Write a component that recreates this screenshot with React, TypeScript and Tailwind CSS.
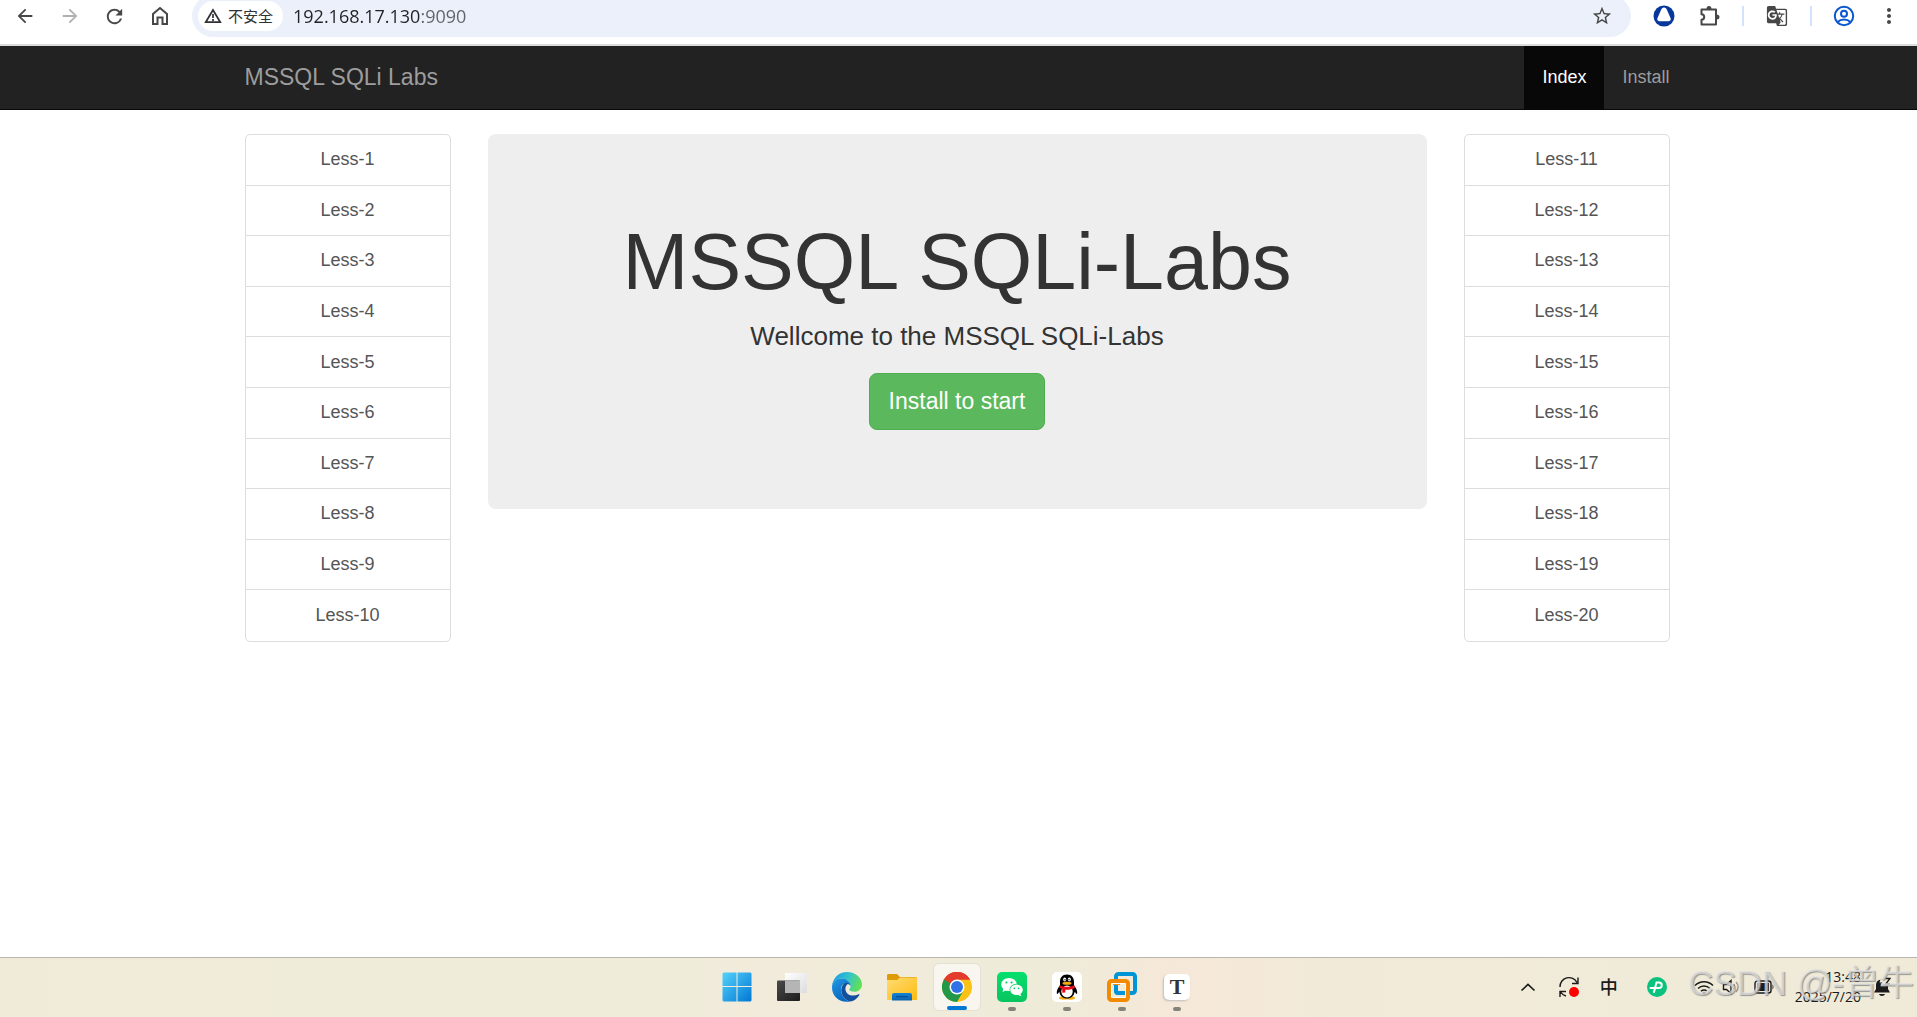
import type { ReactNode } from "react";
import { MdArrowBack, MdArrowForward, MdGTranslate, MdMoreVert, MdRefresh, MdStarBorder } from "react-icons/md";

const leftLessons = [1, 2, 3, 4, 5, 6, 7, 8, 9, 10];
const rightLessons = [11, 12, 13, 14, 15, 16, 17, 18, 19, 20];

function HomeIcon() {
  return (
    <svg viewBox="0 0 18 20" className="h-5 w-[18px]" fill="none" stroke="#474747" strokeWidth="2">
      <path d="M2 18V8l7-6 7 6v10h-4.500v-6.500h-5V18Z" />
    </svg>
  );
}

function WarningIcon() {
  return (
    <svg viewBox="0 0 18 16" className="h-4 w-[18px]" fill="none" stroke="#303134">
      <path d="M9 2 16.300 14.200H1.700Z" strokeWidth="1.700" />
      <path d="M9 6v4M9 11v2" strokeWidth="1.700" />
    </svg>
  );
}

function SailIcon() {
  return (
    <svg viewBox="0 0 22 22" className="size-[22px]">
      <circle cx="11" cy="11" r="10.500" fill="#06379a" />
      <path
        d="M11 2.500c1.600 0 2.400 1.100 3 2.400l3.400 7.800c1 2.300-.400 3.600-2.400 3.600H7c-2 0-3.400-1.300-2.400-3.600L8 4.900c.600-1.300 1.400-2.400 3-2.400Z"
        fill="#fff"
      />
    </svg>
  );
}

function PuzzleIcon() {
  return (
    <svg viewBox="0 0 22 22" className="size-[22px]" fill="none" stroke="#474747" strokeWidth="2" strokeLinejoin="round">
      <path d="M2.500 4.500H17v15H2.500v-4.700c3.600-.300 3.600-5.300 0-5.600Z" />
      <path d="M7.500 4a2.500 3 0 0 1 5 0ZM17.500 9.500a3 2.500 0 0 1 0 5Z" fill="#474747" stroke="none" />
    </svg>
  );
}

function ProfileIcon() {
  return (
    <svg viewBox="0 0 22 22" className="size-[22px]" fill="none" stroke="#0b57d0" strokeWidth="2">
      <circle cx="11" cy="11" r="9.200" />
      <circle cx="11" cy="8.700" r="3" />
      <path d="M4.500 17c3.600-3.300 9.400-3.300 13 0" />
    </svg>
  );
}

function BrowserBar() {
  return (
    <header className="flex h-[46px] items-center overflow-hidden border-b-2 border-[#dcdcdc] bg-white pb-3 text-[#474747]">
      <div className="flex shrink-0 items-center pl-0.5">
        <button aria-label="Back" className="flex w-[45px] justify-center">
          <MdArrowBack className="size-[22px]" />
        </button>
        <button aria-label="Forward" className="flex w-[45px] justify-center text-[#b0b0b0]">
          <MdArrowForward className="size-[22px]" />
        </button>
        <button aria-label="Reload" className="flex w-[45px] justify-center">
          <MdRefresh className="size-[23px]" />
        </button>
        <button aria-label="Home" className="flex w-[45px] justify-center">
          <HomeIcon />
        </button>
      </div>
      <div className="ml-2.5 flex h-[42px] flex-1 shrink-0 items-center rounded-full bg-[#ecf0fa] pl-1.5 pr-[18px]">
        <button className="flex h-[30px] shrink-0 items-center gap-1.5 rounded-full bg-white pl-1.5 pr-2.5 font-['Noto_Sans_CJK_SC',sans-serif] text-[15px] text-[#303134]">
          <WarningIcon />
          不安全
        </button>
        <input
          aria-label="Address"
          defaultValue="192.168.17.130:9090"
          className="ml-2.5 min-w-0 flex-1 bg-[linear-gradient(90deg,#202124_127px,#5f6368_127px)] bg-clip-text font-['Open_Sans',sans-serif] text-[18px] leading-6 text-transparent caret-black outline-none"
        />
        <button aria-label="Bookmark">
          <MdStarBorder className="size-[22px]" />
        </button>
      </div>
      <div className="flex shrink-0 items-center pl-[22px] pr-4">
        <button aria-label="Sail extension">
          <SailIcon />
        </button>
        <button aria-label="Extensions" className="ml-6">
          <PuzzleIcon />
        </button>
        <span className="ml-[21px] h-5 w-0.5 bg-[#d3e3fd]" />
        <button aria-label="Translate" className="ml-[22px]">
          <MdGTranslate className="size-[22px]" />
        </button>
        <span className="ml-[22px] h-5 w-0.5 bg-[#d3e3fd]" />
        <button aria-label="Profile" className="ml-[21px]">
          <ProfileIcon />
        </button>
        <button aria-label="Menu" className="ml-[22px]">
          <MdMoreVert className="size-6" />
        </button>
      </div>
    </header>
  );
}

function Navbar() {
  return (
    <nav className="border-b border-[#080808] bg-[#222] pr-[3px]">
      <div className="mx-auto flex h-[63px] max-w-[1425px] items-stretch justify-between text-[#9d9d9d]">
        <a href="#" className="flex items-center text-[23px]">
          MSSQL SQLi Labs
        </a>
        <div className="flex text-[18px]">
          <a href="#" className="flex items-center bg-[#080808] px-[18px] text-white">
            Index
          </a>
          <a href="#install" className="flex items-center pl-[18px]">
            Install
          </a>
        </div>
      </div>
    </nav>
  );
}

function LessonList({ lessons }: { lessons: number[] }) {
  return (
    <ul className="grid h-[508px] grid-rows-10 divide-y divide-[#ddd] rounded-[5px] border border-[#ddd] text-[18px] text-[#555]">
      {lessons.map((n) => (
        <li key={n}>
          <a href={`#less-${n}`} className="flex h-full items-center justify-center">
            Less-{n}
          </a>
        </li>
      ))}
    </ul>
  );
}

function WindowsIcon() {
  return (
    <svg viewBox="0 0 30 30" className="size-[30px]">
      <defs>
        <linearGradient id="win" x1="0" y1="0" x2="1" y2="1">
          <stop offset="0" stopColor="#55d2fb" />
          <stop offset="1" stopColor="#0078d4" />
        </linearGradient>
      </defs>
      <path d="M1.500.500H14.500V14H.500V1.500ZM15.500.500h13l1 1V14h-14ZM.500 15h14v14.500h-13l-1-1ZM15.500 15h14v13.500l-1 1h-13Z" fill="url(#win)" />
    </svg>
  );
}

function TaskViewIcon() {
  return (
    <svg viewBox="0 0 30 30" className="size-[30px]">
      <defs>
        <linearGradient id="tvDark" x1="0" y1="0" x2="1" y2="1">
          <stop offset="0" stopColor="#4a4a4a" />
          <stop offset="1" stopColor="#1c1c1c" />
        </linearGradient>
        <linearGradient id="tvLight" x1="0" y1="0" x2="1" y2="1">
          <stop offset="0" stopColor="#fff" />
          <stop offset="1" stopColor="#dcdcdc" />
        </linearGradient>
      </defs>
      <rect x="8" y="1" width="22" height="20" rx="1" fill="url(#tvLight)" />
      <rect x="0" y="8.500" width="23" height="20.500" rx="1" fill="url(#tvDark)" />
      <path d="M8 8.500h15V21H8Z" fill="#b5b5b5" />
    </svg>
  );
}

function EdgeIcon() {
  return (
    <svg viewBox="0 0 30 30" className="size-[30px]">
      <defs>
        <linearGradient id="edgeTop" x1="0" y1=".3" x2="1" y2=".6">
          <stop offset="0" stopColor="#1a9de2" />
          <stop offset=".5" stopColor="#35c5c9" />
          <stop offset="1" stopColor="#66e24c" />
        </linearGradient>
        <linearGradient id="edgeBody" x1="0" y1="0" x2=".5" y2="1">
          <stop offset="0" stopColor="#2196e3" />
          <stop offset="1" stopColor="#0668c0" />
        </linearGradient>
      </defs>
      <path d="M0 14.500C.500 6 7 0 15 0c8.600 0 15 6 15 12.500 0 4.500-3.500 7.300-7.500 7.300-3.300 0-5.200-1-5.200-2.200 0-.900 1.300-1.400 1.300-3.600C18.600 9.500 13.500 6.500 9 6.500 4.500 6.500 1 9.500 0 14.500Z" fill="url(#edgeTop)" />
      <path d="M0 15.500C0 9.600 4.500 6.400 9.200 6.400c5 0 9.400 3.300 9.400 7.600 0 0-3.800-4.600-7.600-1.500-4.500 3.800-1.500 15 7 17-9.500 2-18-4.500-18-14Z" fill="url(#edgeBody)" />
      <path d="M12 11.800C6 17.500 10.500 28 18.500 29.600c4-.900 7-3.300 8.900-6.600.300-.600-.200-1-.800-.700-5.600 2.900-13 .800-13.200-5.300-.100-2 .800-3.300 1.500-4.300.500-.700 1.500-1.200 2.400-1-1.900-1.100-3.700-1.200-5.300.1Z" fill="#124f9c" />
    </svg>
  );
}

function FolderIcon() {
  return (
    <svg viewBox="0 0 30 30" className="size-[30px]">
      <defs>
        <linearGradient id="folder" x1="0" y1="0" x2="1" y2="1">
          <stop offset="0" stopColor="#ffdc73" />
          <stop offset="1" stopColor="#fdbb12" />
        </linearGradient>
        <linearGradient id="tray" x1="0" y1="0" x2="0" y2="1">
          <stop offset="0" stopColor="#1384d8" />
          <stop offset="1" stopColor="#0c63b0" />
        </linearGradient>
      </defs>
      <path d="M0 3.500C0 2.600.600 2 1.500 2H10l3 3h15.500c.900 0 1.500.600 1.500 1.500V12H0Z" fill="#dd9a09" />
      <path d="M0 8h10l3-2.500h17V27c0 .600-.400 1-1 1H1c-.600 0-1-.400-1-1Z" fill="url(#folder)" />
      <path d="M5 28.500V23c0-1.200.800-2 2-2h16c1.200 0 2 .800 2 2v5.500Z" fill="url(#tray)" />
      <path d="M9 24.700h12" stroke="#084786" />
    </svg>
  );
}

function ChromeIcon() {
  return (
    <svg viewBox="0 0 30 30" className="size-[30px]">
      <circle cx="15" cy="15" r="15" fill="#fbc116" />
      <path d="M15 15 2 7.500A15 15 0 0 1 28 7.500Z" fill="#e33b2e" />
      <path d="M2 7.500A15 15 0 0 0 15 30l6.500-11.300L15 15Z" fill="#229848" />
      <path d="M15 7.500h13L21.500 18.700Z" fill="#fbc116" />
      <path d="m2 7.500 6.500 11.300L15 7.500Z" fill="#229848" />
      <path d="M2 7.500C5 2.800 9.500 0 15 0s10.200 2.900 13 7.500H15a7.500 7.500 0 0 0-6.600 4Z" fill="#e33b2e" />
      <path d="M2 7.500 8.500 18.700" stroke="#229848" />
      <circle cx="15" cy="15" r="7.500" fill="#fff" />
      <circle cx="15" cy="15" r="6" fill="#2f72e8" />
    </svg>
  );
}

function WeChatIcon() {
  return (
    <svg viewBox="0 0 30 30" className="size-[30px]">
      <defs>
        <linearGradient id="wechat" x1="0" y1="0" x2="0" y2="1">
          <stop offset="0" stopColor="#04df6d" />
          <stop offset="1" stopColor="#08c45f" />
        </linearGradient>
      </defs>
      <rect width="30" height="30" rx="5" fill="url(#wechat)" />
      <path d="m6.500 16-1 4 4-2Z" fill="#fff" />
      <ellipse cx="12" cy="12.500" rx="7.800" ry="6.600" fill="#fff" />
      <ellipse cx="19.500" cy="17.700" rx="7" ry="6" fill="#07cd64" />
      <ellipse cx="19.500" cy="17.700" rx="6.300" ry="5.300" fill="#fff" />
      <path d="m23 21.500 1.500 2.700-4-1.500Z" fill="#fff" />
      <g fill="#07cd64">
        <circle cx="9.400" cy="10.500" r="1.100" />
        <circle cx="14.600" cy="10.500" r="1.100" />
        <circle cx="17.300" cy="16.300" r=".9" />
        <circle cx="21.600" cy="16.300" r=".9" />
      </g>
    </svg>
  );
}

function QQIcon() {
  return (
    <svg viewBox="0 0 30 30" className="size-[30px]">
      <rect width="30" height="30" rx="5" fill="#fff" />
      <ellipse cx="11.500" cy="26" rx="4.500" ry="1.700" fill="#f9ab0d" />
      <ellipse cx="18.500" cy="26" rx="4.500" ry="1.700" fill="#f9ab0d" />
      <path d="M15 2.500c-4.800 0-7 3.300-7 7.500v3.500c-2 2.300-3.600 5.200-3.200 8 .300 1.200 1.500-.200 2.500-1.800C8 24 11 26.500 15 26.500s7-2.500 7.700-6.800c1 1.600 2.200 3 2.500 1.800.400-2.800-1.200-5.700-3.200-8V10c0-4.200-2.200-7.500-7-7.500Z" fill="#000" />
      <ellipse cx="15" cy="19.500" rx="5.700" ry="6" fill="#fff" />
      <path d="M7.700 13.200c4.500 2 10.100 2 14.600 0l.7 2.500c-2.900 1.700-6.500 2.300-9.700 2v2.800l-3 .200-.100-3.600-2.900-1.400Z" fill="#e60d1d" />
      <ellipse cx="12.700" cy="7.500" rx="1.500" ry="2" fill="#fff" />
      <ellipse cx="17.300" cy="7.500" rx="1.500" ry="2" fill="#fff" />
      <circle cx="13" cy="7.700" r=".7" />
      <circle cx="17" cy="7.700" r=".7" />
      <ellipse cx="15" cy="11.300" rx="4.500" ry="1.500" fill="#f9ab0d" />
    </svg>
  );
}

function VmwareIcon() {
  return (
    <svg viewBox="0 0 30 30" className="size-[30px]" fill="none" strokeWidth="4">
      <rect x="9" y="2" width="19" height="19" rx="2.500" stroke="#0095d6" />
      <rect x="2" y="9" width="19" height="19" rx="2.500" stroke="#f38b00" />
      <path d="M9 17v2a2 2 0 0 0 2 2h8" stroke="#0095d6" />
      <path d="M6 11h7M21 24v-8" stroke="#f38b00" />
      <rect x="4.500" y="11.500" width="14" height="14" rx="1" stroke="#fff" strokeWidth="1" />
    </svg>
  );
}

function TyporaIcon() {
  return (
    <span className="flex size-[26px] items-center justify-center rounded-[5px] bg-white font-['Liberation_Serif',serif] text-[22px] font-bold leading-none text-[#333] shadow-[-1px_1px_2px_#bbb]">
      T
    </span>
  );
}

const apps: { name: string; icon: ReactNode; state?: "active" | "open" }[] = [
  { name: "Start", icon: <WindowsIcon /> },
  { name: "Task View", icon: <TaskViewIcon /> },
  { name: "Edge", icon: <EdgeIcon /> },
  { name: "Explorer", icon: <FolderIcon /> },
  { name: "Chrome", icon: <ChromeIcon />, state: "active" },
  { name: "WeChat", icon: <WeChatIcon />, state: "open" },
  { name: "QQ", icon: <QQIcon />, state: "open" },
  { name: "VMware", icon: <VmwareIcon />, state: "open" },
  { name: "Typora", icon: <TyporaIcon />, state: "open" },
];

function SystemTray() {
  return (
    <div className="relative flex items-center justify-end pr-[23px] text-[#1a1a1a]">
      <button aria-label="Hidden icons">
        <svg viewBox="0 0 16 10" className="h-2.5 w-4" fill="none" stroke="currentColor" strokeWidth="1.700">
          <path d="m1.500 8.500 6.500-6 6.500 6" />
        </svg>
      </button>
      <button aria-label="Updates" className="ml-[22px]">
        <svg viewBox="0 0 22 22" className="size-[22px]" fill="none" stroke="currentColor" strokeWidth="1.400">
          <path d="M2 11a9 9 0 0 1 17-4.500M20 1.500v6h-6M8 20a9 9 0 0 1-5.500-4M2 21v-5.500h6" />
          <circle cx="16" cy="16" r="5" fill="#f00" stroke="none" />
        </svg>
      </button>
      <button aria-label="Input language" className="ml-[19px] w-5 font-['Noto_Sans_CJK_SC',sans-serif] text-[18px] font-medium">
        中
      </button>
      <button aria-label="Sync app" className="ml-7">
        <svg viewBox="0 0 20 20" className="size-5" fill="none" stroke="#fff" strokeWidth="2">
          <circle cx="10" cy="10" r="10" fill="#09c27d" stroke="none" />
          <path d="M3.500 11H12a2.700 2.700 0 0 0 0-5.500H9.500L7 15" strokeLinecap="round" />
        </svg>
      </button>
      <button aria-label="Network" className="ml-[27px]">
        <svg viewBox="0 0 20 16" className="h-4 w-5" fill="none" stroke="currentColor" strokeWidth="1.500">
          <path d="M1 6.500a12.500 12.500 0 0 1 18 0M4 9.500a8.500 8.500 0 0 1 12 0M7 12.300a4.200 4.200 0 0 1 6 0" />
          <circle cx="10" cy="14.300" r="1.500" fill="currentColor" stroke="none" />
        </svg>
      </button>
      <button aria-label="Volume" className="ml-2">
        <svg viewBox="0 0 18 18" className="size-[18px]" fill="none" stroke="currentColor" strokeWidth="1.400">
          <path d="M1.500 6.500h3L9 2.500v13l-4.500-4h-3ZM11.500 6.500a4 4 0 0 1 0 5" />
          <path d="M14 4a7 7 0 0 1 0 10" opacity=".4" />
        </svg>
      </button>
      <button aria-label="Battery" className="ml-3.5">
        <svg viewBox="0 0 20 14" className="h-3.5 w-5" fill="currentColor">
          <rect x="1" y="1" width="16" height="12" rx="2.500" fill="none" stroke="currentColor" strokeWidth="1.400" />
          <path d="M3 3h12v8H3ZM18.500 4.500c1.300.500 1.300 4.500 0 5Z" />
        </svg>
      </button>
      <div className="ml-[21px] text-right font-['Open_Sans',sans-serif] text-[14px] leading-5">
        <p>13:48</p>
        <p>2025/7/20</p>
      </div>
      <button aria-label="Notifications" className="ml-3">
        <svg viewBox="0 0 18 20" className="h-5 w-[18px]" fill="currentColor">
          <path d="M1 15.500 3 12V8c0-3 1.700-5 4.500-5.500l-1 3h3l-2.200 3.800h4.200L14.500 9H15v3l2 3.500ZM6 17h6c-.500 2.500-5.500 2.500-6 0Z" />
          <path d="M12.500 1.500H17L12.700 7H17" fill="none" stroke="currentColor" strokeWidth="1.400" />
        </svg>
      </button>
      <p className="pointer-events-none absolute bottom-1.5 right-0 whitespace-nowrap font-['Liberation_Sans','Noto_Sans_CJK_SC',sans-serif] text-[35px] leading-9 text-[#e4e4e4]/70 [text-shadow:1px_1px_1px_#777777bb]">
        CSDN @-曾牛
      </p>
    </div>
  );
}

function Taskbar() {
  return (
    <footer className="grid h-[60px] grid-cols-[1fr_auto_1fr] items-center border-t border-[#b9b7ad] bg-[linear-gradient(90deg,#efebd8_0%,#efecda_35%,#f2ebdb_40%,#eeebd9_55%,#f6e8d9_61%,#f1ead8_70%,#efebd8_100%)] pb-0.5 pr-[3px]">
      <div />
      <div className="flex items-center gap-[7px]">
        {apps.map((app) => (
          <button
            key={app.name}
            aria-label={app.name}
            className={
              app.state === "active"
                ? "relative flex size-12 items-center justify-center rounded-md border border-[#e4e0d4] bg-[#f9f6ef]"
                : "relative flex size-12 items-center justify-center"
            }
          >
            {app.icon}
            {app.state === "active" && <span className="absolute bottom-0 h-1 w-5 rounded-full bg-[#0078d4]" />}
            {app.state === "open" && <span className="absolute bottom-0 h-1 w-2 rounded-full bg-[#85827a]" />}
          </button>
        ))}
      </div>
      <SystemTray />
    </footer>
  );
}

export default function App() {
  return (
    <div className="flex min-h-screen flex-col bg-white font-['Liberation_Sans',Arial,sans-serif]">
      <BrowserBar />
      <Navbar />
      <div className="flex-1 pr-[3px] pt-6">
        <main className="mx-auto grid max-w-[1425px] grid-cols-[206px_1fr_206px] items-start gap-[37px]">
          <LessonList lessons={leftLessons} />
          <section className="flex flex-col items-center rounded-lg bg-[#eee] px-[75px] pb-[79px] pt-[84px] text-center text-[#333]">
            <h1 className="text-[79px] leading-[87px]">MSSQL SQLi-Labs</h1>
            <p className="mt-[13px] text-[26px] leading-9">Wellcome to the MSSQL SQLi-Labs</p>
            <button className="mt-[19px] h-[57px] rounded-lg border border-[#4cae4c] bg-[#5cb85c] px-[19px] text-[23px] text-white">
              Install to start
            </button>
          </section>
          <LessonList lessons={rightLessons} />
        </main>
      </div>
      <Taskbar />
    </div>
  );
}
